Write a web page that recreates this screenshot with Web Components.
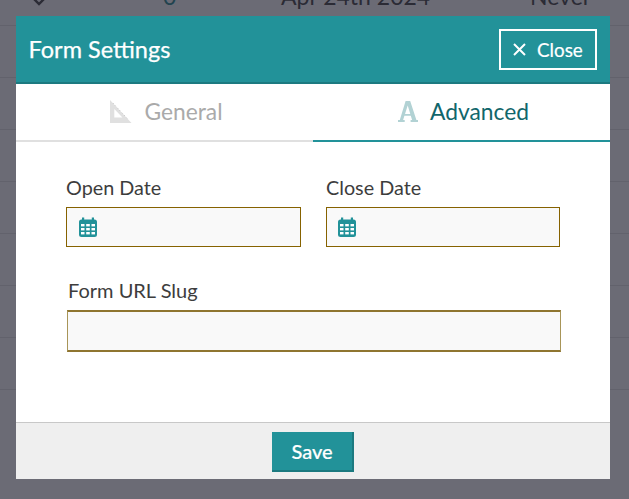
<!DOCTYPE html>
<html><head><meta charset="utf-8"><style>
html,body{margin:0;height:100%;overflow:hidden;background:#fff;font-family:Lato,sans-serif}
</style></head><body>
<bg-table></bg-table>
<modal-overlay>
  <form-modal></form-modal>
</modal-overlay>
<script>
const def=(n,html)=>customElements.define(n,class extends HTMLElement{constructor(){super();this.attachShadow({mode:'open'}).innerHTML=html(this)}});
def('bg-table',()=>`<style>
:host{display:block;height:499px;overflow:hidden;background:#fff;font:23px Lato,sans-serif;color:#444}
.r{height:51px;border-bottom:1px solid #e3e3e3}
.first{height:25px;box-sizing:content-box;padding-left:163px;display:grid;grid-template-columns:118px 249px 1fr;align-items:start;overflow:hidden}
.first span{display:block;margin-top:-18px;line-height:28px;white-space:nowrap}
.c{color:#2a8a90}
svg{display:block;position:absolute;left:28px;top:-5px}
.last{border:0;height:70px}
</style>
<div class="r first"><svg width="22" height="14" viewBox="0 0 22 14" fill="none" stroke="#444" stroke-width="2.4"><path d="M3 1l8 8 8-8"/></svg><span class="c">0</span><span>Apr 24th 2024</span><span>Never</span></div>
<div class="r"></div><div class="r"></div><div class="r"></div><div class="r"></div><div class="r"></div><div class="r"></div><div class="r"></div><div class="r last"></div>`);
def('modal-overlay',()=>`<style>
:host{position:absolute;inset:0;background:rgba(30,30,45,.66);display:block;padding:16px;box-sizing:border-box}
</style><slot></slot>`);
def('icon-ruler',()=>`<style>:host{display:block;width:22px;height:23px}svg{display:block}</style>
<svg width="22" height="23" viewBox="0 0 23 23" preserveAspectRatio="none"><path fill="#e0e0e0" fill-rule="evenodd" d="M0 0 22.500 23H.5A.5.5 0 0 1 0 22.500ZM4.500 9v8.500H13Z"/><path stroke="#bdbdbd" stroke-width="1" stroke-dasharray="1 2.400" fill="none" d="M3 3 19 19.500"/></svg>`);
def('icon-letter',()=>`<style>:host{display:block;width:20px;height:21px}svg{display:block}</style>
<svg width="20" height="21" viewBox="1 1 20 21"><path fill="#b2d2d4" d="M8.600 1h4.600l6.200 19H21v2h-7.400v-2h1.500l-1.300-4.300H7.400L6.100 20h1.600v2H1v-2h1.800ZM8 14h5.300L10.700 5.400Z"/></svg>`);
def('icon-cal',()=>`<style>:host{display:block;width:18px;height:21px}svg{display:block}</style>
<svg width="18" height="21" viewBox="0 0 18 21"><path fill="#229299" d="M3 1.500h2.200V3.500h7.600V1.500h2.200V3.500h.5A2.500 2.500 0 0 1 18 6v12.500a2.500 2.500 0 0 1-2.500 2.500h-13A2.500 2.500 0 0 1 0 18.500V6a2.500 2.500 0 0 1 2.500-2.500H3Z"/><g fill="#fff"><rect x="2" y="8" width="3.500" height="2.400"/><rect x="7.200" y="8" width="3.600" height="2.400"/><rect x="12.500" y="8" width="3.500" height="2.400"/><rect x="2" y="12" width="3.500" height="2.400"/><rect x="7.200" y="12" width="3.600" height="2.400"/><rect x="12.500" y="12" width="3.500" height="2.400"/><rect x="2" y="16" width="3.500" height="2.400"/><rect x="7.200" y="16" width="3.600" height="2.400"/><rect x="12.500" y="16" width="3.500" height="2.400"/></g></svg>`);
def('close-button',()=>`<style>
:host{display:flex;align-items:center;gap:11px;box-sizing:border-box;width:98px;height:41px;border:2px solid #fff;padding-left:12px;color:#fff;font:18.800px Lato,sans-serif;-webkit-text-stroke:.2px #fff}
svg{display:block}
</style><svg width="13" height="13" viewBox="0 0 13 13" stroke="#fff" stroke-width="2" fill="none"><path d="M1 1l11 11M12 1 1 12"/></svg><span>Close</span>`);
def('modal-head',()=>`<style>
:host{display:flex;justify-content:space-between;align-items:center;box-sizing:border-box;height:68px;background:#229299;border-bottom:2px solid #1c7a80;padding:0 13px 0 12.500px;color:#fff;font:23.500px Lato,sans-serif}
span{-webkit-text-stroke:.25px #fff}
</style><span>Form Settings</span><close-button></close-button>`);
def('tab-item',(el)=>{const on=el.hasAttribute('on');return `<style>
:host{flex:1 1 0;display:flex;align-items:center;justify-content:center;gap:12px;height:58px;box-sizing:border-box;border-bottom:2px solid ${on?'#229299':'#e0e0e0'};font:22.800px Lato,sans-serif;color:${on?'#11666b':'#aaa'};padding:0 0 2px 4px}
</style><slot></slot>`});
def('tab-bar',()=>`<style>:host{display:grid;grid-template-columns:297px 297px}</style>
<tab-item><icon-ruler></icon-ruler><span>General</span></tab-item>
<tab-item on><icon-letter></icon-letter><span>Advanced</span></tab-item>`);
def('date-field',(el)=>`<style>
:host{display:block;font:19.800px Lato,sans-serif;color:#3d3d3d;width:${el.getAttribute('w')}px}
label{display:block;line-height:20px;margin-bottom:10px}
.b{box-sizing:border-box;height:40px;border:1px solid #866200;background:#f9f9f9;display:flex;align-items:center;padding:0 0 1px ${el.getAttribute('pad')}px}
</style><label>${el.getAttribute('label')}</label><div class="b"><icon-cal></icon-cal></div>`);
def('slug-field',()=>`<style>
:host{display:block;font:20px Lato,sans-serif;color:#3d3d3d;width:494px}
label{display:block;line-height:20px;margin:0 0 10px 1px}
.b{box-sizing:border-box;height:42px;background:#f9f9f9;border:1px solid #a89558;border-top:2px solid #8f7530;border-bottom:2px solid #8f7530}
</style><label>Form URL Slug</label><div class="b"></div>`);
def('modal-body',()=>`<style>
:host{display:block;box-sizing:border-box;height:280px;padding:35px 0 0 50px;background:#fff}
.row{display:grid;grid-template-columns:235px 234px;column-gap:25px;margin-bottom:33px}
slug-field{margin-left:1px}
</style><div class="row"><date-field label="Open Date" w="235" pad="11.500"></date-field><date-field label="Close Date" w="234" pad="10.700"></date-field></div><slug-field></slug-field>`);
def('modal-foot',()=>`<style>
:host{display:flex;justify-content:center;align-items:center;box-sizing:border-box;height:57px;background:#efefef;border-top:1px solid #c8c8c8;padding-top:1px}
.s{box-sizing:border-box;width:82px;height:40px;background:#229299;border-right:2px solid #1c7a80;border-bottom:2px solid #1c7a80;color:#fff;font:500 20px Lato,sans-serif;-webkit-text-stroke:.2px #fff;display:flex;align-items:center;justify-content:center}
</style><div class="s">Save</div>`);
def('form-modal',()=>`<style>
:host{display:block;width:594px;height:463px;background:#fff}
</style><modal-head></modal-head><tab-bar></tab-bar><modal-body></modal-body><modal-foot></modal-foot>`);
</script>
</body></html>
